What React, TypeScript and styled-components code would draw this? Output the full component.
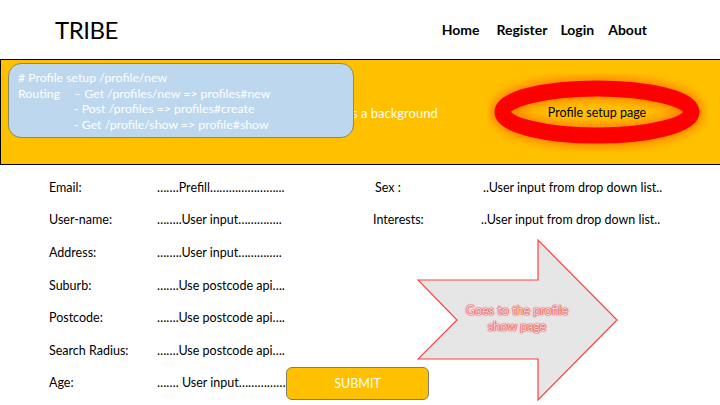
import React from "react";
import styled, { createGlobalStyle } from "styled-components";

const Global = createGlobalStyle`
  html, body { margin: 0; padding: 0; background: #ffffff; }
  body { width: 720px; height: 405px; overflow: hidden; font-family: Lato, "Open Sans", sans-serif; }
`;

const Page = styled.div`
  width: 720px;
  height: 405px;
  display: flex;
  flex-direction: column;
`;

const Header = styled.header`
  height: 59px;
  display: flex;
  align-items: center;
  justify-content: space-between;
  padding: 0 73px 0 55px;
  box-sizing: border-box;
`;

const Logo = styled.div`
  font-size: 24px;
  letter-spacing: -0.5px;
  color: #000;
  margin-top: -1px;
`;

const Nav = styled.nav`
  display: flex;
  gap: 13px;
  margin-top: -1px;
`;

const NavItem = styled.span<{ $gap?: number }>`
  font-size: 14px;
  font-weight: 700;
  color: #000;
  margin-left: ${(p) => p.$gap ?? 0}px;
`;

const Banner = styled.section`
  position: relative;
  height: 106px;
  box-sizing: border-box;
  background: #ffc000;
  border-top: 1.5px solid #000;
  border-bottom: 1.5px solid #000;
  border-left: 1.5px solid #000;
  display: flex;
  align-items: center;
`;

const BgText = styled.span`
  margin-left: 307px;
  margin-top: 2px;
  font-size: 13px;
  color: #ffffff;
  width: 179px;
  white-space: nowrap;
`;

const Note = styled.div`
  position: absolute;
  left: 7px;
  top: 3px;
  width: 346px;
  height: 75px;
  box-sizing: border-box;
  background: #bdd7ee;
  border: 1px solid #8a8a5c;
  border-radius: 13px;
  padding: 6px 0 0 9px;
  color: #ffffff;
  font-size: 12.3px;
  line-height: 15.6px;
  display: grid;
  grid-template-columns: 55px auto;
  align-content: start;
`;

const NoteCell = styled.span<{ $indent?: number }>`
  padding-left: ${(p) => p.$indent ?? 0}px;
  white-space: pre;
`;

const NoteFull = styled.span`
  grid-column: 1 / 3;
  white-space: pre;
`;

const Oval = styled.div`
  position: relative;
  width: 220px;
  height: 78px;
  margin-top: 2px;
  display: flex;
  align-items: center;
  justify-content: center;
`;

const OvalSvg = styled.svg`
  position: absolute;
  inset: 0;
`;

const OvalText = styled.span`
  position: relative;
  font-size: 12.5px;
  color: #000;
  margin-top: -1px;
`;

const Form = styled.div`
  display: grid;
  grid-template-columns: 108px 218px 108px 1fr;
  grid-template-rows: repeat(7, 32.6px);
  padding: 6px 0 0 49px;
  align-items: center;
  font-size: 12.5px;
  color: #000;
`;

const Label = styled.span<{ $col?: number; $row?: number; $shift?: number }>`
  grid-column: ${(p) => p.$col ?? 1};
  ${(p) => (p.$row ? `grid-row: ${p.$row};` : "")}
  margin-left: ${(p) => p.$shift ?? 0}px;
  white-space: nowrap;
`;

const Value = styled.span<{ $col?: number; $shift?: number }>`
  grid-column: ${(p) => p.$col ?? 2};
  margin-left: ${(p) => p.$shift ?? 0}px;
  white-space: nowrap;
`;

const AgeCell = styled.div`
  grid-column: 2 / 4;
  grid-row: 7;
  display: flex;
  align-items: center;
  z-index: 1;
`;

const AgeText = styled.span`
  width: 129px;
  white-space: nowrap;
`;

const Submit = styled.button`
  width: 143px;
  height: 33px;
  margin-top: 2px;
  box-sizing: border-box;
  background: #ffc000;
  border: 1px solid #7f7f6a;
  border-radius: 6px;
  color: #ffffff;
  font-family: Lato, sans-serif;
  font-size: 12.5px;
  padding: 0;
`;

const ArrowBox = styled.div`
  grid-column: 3 / 5;
  grid-row: 3 / 8;
  align-self: start;
  margin-left: 42px;
  margin-top: 3px;
  position: relative;
  width: 202px;
  height: 162px;
`;

const ArrowText = styled.div`
  position: absolute;
  left: 38px;
  top: 64px;
  width: 124px;
  text-align: center;
  font-size: 12.5px;
  line-height: 15.5px;
  color: #fbdcdc;
  text-shadow: 0 0 1px #e02828, 0 0 1px #e02828, 0 0 2px #ff5050;
`;

export default function App() {
  return (
    <Page>
      <Global />
      <Header>
        <Logo>TRIBE</Logo>
        <Nav>
          <NavItem>Home</NavItem>
          <NavItem $gap={4}>Register</NavItem>
          <NavItem>Login</NavItem>
          <NavItem $gap={1}>About</NavItem>
        </Nav>
      </Header>
      <Banner>
        <BgText>Image as a background</BgText>
        <Oval>
          <OvalSvg viewBox="0 0 220 78" width="220" height="78">
            <defs>
              <filter id="glow" x="-30%" y="-60%" width="160%" height="220%">
                <feGaussianBlur stdDeviation="4" />
              </filter>
            </defs>
            <ellipse cx="110" cy="38" rx="94.5" ry="23.5" fill="none" stroke="#ff7000" strokeWidth="24" filter="url(#glow)" opacity="0.7" />
            <ellipse cx="110" cy="38" rx="94.5" ry="23.5" fill="none" stroke="#ff0000" strokeWidth="16" />
          </OvalSvg>
          <OvalText>Profile setup page</OvalText>
        </Oval>
        <Note>
          <NoteFull># Profile setup /profile/new</NoteFull>
          <NoteCell>Routing</NoteCell>
          <NoteCell $indent={1}>– Get /profiles/new =&gt; profiles#new</NoteCell>
          <NoteCell />
          <NoteCell $indent={1}>- Post /profiles =&gt; profiles#create</NoteCell>
          <NoteCell />
          <NoteCell $indent={1}>- Get /profile/show =&gt; profile#show</NoteCell>
        </Note>
      </Banner>
      <Form>
        <Label>Email:</Label>
        <Value>…….Prefill…………………...</Value>
        <Label $col={3}>Sex :</Label>
        <Value $col={4}>..User input from drop down list..</Value>

        <Label>User-name:</Label>
        <Value>……..User input…………..</Value>
        <Label $col={3} $shift={-2}>Interests:</Label>
        <Value $col={4} $shift={-2}>..User input from drop down list..</Value>

        <Label>Address:</Label>
        <Value>……..User input…………..</Value>

        <Label>Suburb:</Label>
        <Value>…….Use postcode api….</Value>

        <Label>Postcode:</Label>
        <Value>…….Use postcode api….</Value>

        <Label>Search Radius:</Label>
        <Value>…….Use postcode api….</Value>

        <Label $row={7}>Age:</Label>
        <AgeCell>
          <AgeText>……. User input……………</AgeText>
          <Submit>SUBMIT</Submit>
        </AgeCell>

        <ArrowBox>
          <svg width="202" height="162" viewBox="0 0 202 162">
            <polygon
              points="1,41 121,41 121,1 200,81 121,161 121,120 1,120 40,81"
              fill="#e7e6e6"
              stroke="#ff4040"
              strokeWidth="1.2"
            />
          </svg>
          <ArrowText>Goes to the profile show page</ArrowText>
        </ArrowBox>
      </Form>
    </Page>
  );
}
